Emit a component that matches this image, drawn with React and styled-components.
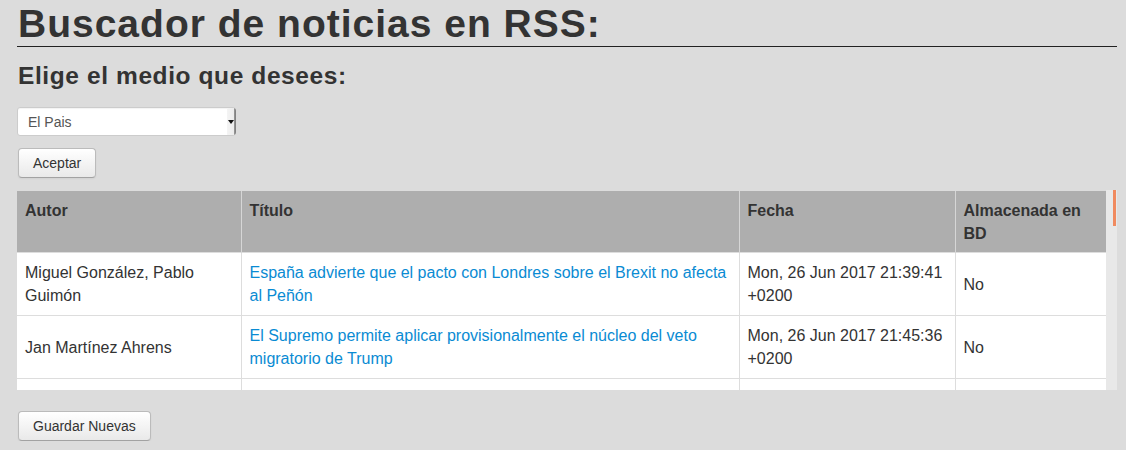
import React from "react";
import styled, { createGlobalStyle } from "styled-components";

const GlobalStyle = createGlobalStyle`
  body {
    margin     : 0;
    background : #dcdcdc;
    color      : #333;
    font-family: "Liberation Sans", Arial, sans-serif;
  }
`;

const Page = styled.div`
  padding : 0 9px 0 17px;
`;

const Title = styled.h1`
  margin         : 3px 0 0;
  padding        : 0 0 1px 1px;
  font-size      : 39px;
  line-height    : 42px;
  font-weight    : 700;
  letter-spacing : 1px;
  color          : #333;
  border-bottom  : 1px solid #222;
`;

const Subtitle = styled.h2`
  margin         : 16px 0 0 1px;
  font-size      : 24.5px;
  line-height    : 26px;
  font-weight    : 700;
  letter-spacing : 0.6px;
  color          : #333;
`;

const SelectWrap = styled.div`
  position   : relative;
  width      : 219px;
  margin-top : 18px;
`;

const Select = styled.select`
  appearance    : none;
  width         : 100%;
  height        : 29px;
  padding       : 0 20px 0 10px;
  border        : 1px solid #ccc;
  border-radius : 3px;
  background    : #fff;
  color         : #555;
  font-family   : "Liberation Sans", Arial, sans-serif;
  font-size     : 14px;
  box-shadow    : inset 0 1px 1px rgba(0, 0, 0, 0.05);
`;

const Arrow = styled.span`
  position      : absolute;
  top           : 1px;
  right         : 0;
  width         : 9px;
  height        : 27px;
  background    : linear-gradient(to right, #f4f4f4 0, #ececec 7px, #9a9a9a 7px, #7a7a7a 9px);
  border-radius : 0 3px 3px 0;
  pointer-events: none;

  &::after {
    content     : "";
    position    : absolute;
    top         : 12px;
    left        : 1px;
    border-left : 3px solid transparent;
    border-right: 3px solid transparent;
    border-top  : 4px solid #111;
  }
`;

const Button = styled.button`
  display       : block;
  margin-top    : ${(p) => p.$top}px;
  margin-left   : 1px;
  padding       : 4px 14px;
  font-family   : "Liberation Sans", Arial, sans-serif;
  font-size     : 14px;
  line-height   : 20px;
  color         : #333;
  background    : linear-gradient(to bottom, #ffffff, #e9e9e9);
  border        : 1px solid #bbb;
  border-bottom-color: #a2a2a2;
  border-radius : 4px;
  box-shadow    : inset 0 1px 0 rgba(255, 255, 255, 0.2), 0 1px 2px rgba(0, 0, 0, 0.05);
`;

const Scroller = styled.div`
  display    : flex;
  margin-top : 12px;
  height     : 200px;
`;

const Viewport = styled.div`
  flex     : 1;
  overflow : hidden;
`;

const Track = styled.div`
  width      : 11px;
  flex-shrink: 0;
  background : #e8e8e8;
`;

const Thumb = styled.div`
  width       : 3px;
  height      : 36px;
  margin-left : 7px;
  background  : #f08a5f;
`;

const Table = styled.table`
  width           : 100%;
  margin-top      : 1px;
  border-collapse : collapse;
  table-layout    : fixed;
  font-size       : 16px;
  line-height     : 23px;
  background      : #fff;
`;

const Col = styled.col`
  width : ${(p) => p.$w}px;
`;

const Th = styled.th`
  padding        : 8px 8px 7px;
  text-align     : left;
  vertical-align : top;
  background     : #aeaeae;
  font-weight    : 700;
  color          : #333;
  border-left    : 1px solid #d6d6d6;

  &:first-child {
    border-left : none;
  }
`;

const Td = styled.td`
  padding        : 8px;
  vertical-align : middle;
  color          : #333;
  border-left    : 1px solid #ddd;
  border-top     : 1px solid #ddd;

  &:first-child {
    border-left : none;
  }
`;

const Link = styled.a`
  color           : #0a8bd3;
  text-decoration : none;
`;

const news = [
  ["Miguel González, Pablo Guimón", "España advierte que el pacto con Londres sobre el Brexit no afecta al Peñón", "Mon, 26 Jun 2017 21:39:41 +0200"],
  ["Jan Martínez Ahrens", "El Supremo permite aplicar provisionalmente el núcleo del veto migratorio de Trump", "Mon, 26 Jun 2017 21:45:36 +0200"],
  ["Carlos E. Cué", "Macri afronta las primarias con la economía todavía en recuperación", "Mon, 26 Jun 2017 20:58:12 +0200"],
  ["Elsa García de Blas", "El PSOE de Sánchez prepara su nueva ejecutiva federal", "Mon, 26 Jun 2017 20:31:05 +0200"],
];

const columns = [
  ["Autor", 224],
  ["Título", 498],
  ["Fecha", 216],
  ["Almacenada en BD", 151],
];

const NewsTable = () => (
  <Scroller>
    <Viewport>
      <Table>
        <colgroup>
          {columns.map(([label, w]) => (
            <Col key={label} $w={w} />
          ))}
        </colgroup>
        <thead>
          <tr>
            {columns.map(([label]) => (
              <Th key={label}>{label}</Th>
            ))}
          </tr>
        </thead>
        <tbody>
          {news.map(([author, title, date]) => (
            <tr key={title}>
              <Td>{author}</Td>
              <Td>
                <Link href="#">{title}</Link>
              </Td>
              <Td>{date}</Td>
              <Td>No</Td>
            </tr>
          ))}
        </tbody>
      </Table>
    </Viewport>
    <Track>
      <Thumb />
    </Track>
  </Scroller>
);

export default function App() {
  return (
    <Page>
      <GlobalStyle />
      <Title>Buscador de noticias en RSS:</Title>
      <Subtitle>Elige el medio que desees:</Subtitle>
      <SelectWrap>
        <Select defaultValue="elpais">
          <option value="elpais">El Pais</option>
          <option value="elmundo">El Mundo</option>
          <option value="abc">ABC</option>
        </Select>
        <Arrow />
      </SelectWrap>
      <Button $top={12}>Aceptar</Button>
      <NewsTable />
      <Button $top={21}>Guardar Nuevas</Button>
    </Page>
  );
}
